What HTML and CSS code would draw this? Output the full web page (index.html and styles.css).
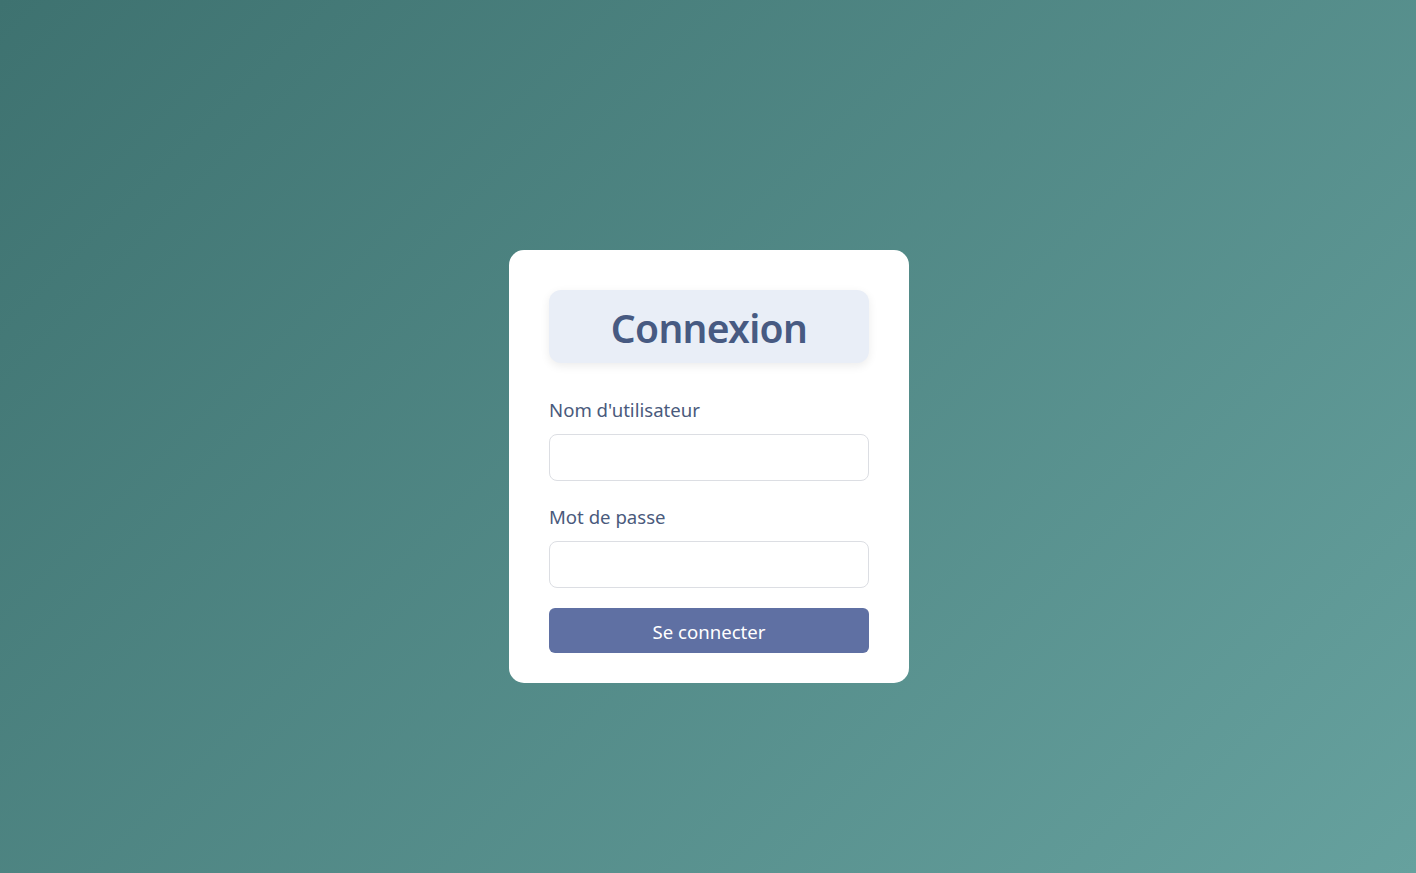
FILE: index.html
```html
<!DOCTYPE html>
<html lang="fr">
<head>
<meta charset="utf-8">
<title>Connexion</title>
<link rel="stylesheet" href="styles.css">
</head>
<body>
<main class="page">
  <form class="card">
    <h1 class="title">Connexion</h1>
    <div class="field">
      <label class="label" for="user">Nom d'utilisateur</label>
      <input class="input" id="user" type="text">
    </div>
    <div class="field">
      <label class="label" for="pass">Mot de passe</label>
      <input class="input" id="pass" type="password">
    </div>
    <button class="btn" type="button">Se connecter</button>
  </form>
</main>
</body>
</html>
```
FILE: styles.css
```css
* { box-sizing: border-box; }
html, body { margin: 0; height: 100%; }
body {
  font-family: "Noto Sans", "Open Sans", sans-serif;
  background: linear-gradient(135deg, #3e7270 0%, #66a19e 100%);
}
.page {
  min-height: 100vh;
  padding: 60px 0 0 2px;
  display: flex;
  align-items: center;
  justify-content: center;
}
.card {
  width: 400px;
  background: #fff;
  border-radius: 15px;
  padding: 40px 40px 30px;
  display: flex;
  flex-direction: column;
}
.title {
  margin: 0 0 35px;
  height: 73px;
  display: flex;
  align-items: center;
  justify-content: center;
  background: #e9eef7;
  border-radius: 12px;
  box-shadow: 0 3px 10px rgba(0,0,0,0.08);
  color: #475a82;
  font-size: 39px;
  font-weight: 600;
  letter-spacing: -0.7px;
  padding-top: 1px;
}
.field {
  display: flex;
  flex-direction: column;
  margin-bottom: 24px;
}
.field + .field { margin-bottom: 20px; }
.label {
  color: #4a5a7c;
  font-size: 18.6px;
  line-height: 24px;
  margin-bottom: 12px;
}
.input {
  height: 47px;
  border: 1px solid #dcdee3;
  border-radius: 8px;
  padding: 0 12px;
  font: inherit;
}
.btn {
  height: 45px;
  border: 0;
  border-radius: 6px;
  background: #5f70a3;
  color: #fff;
  font: inherit;
  font-size: 18.6px;
  padding-top: 2px;
}
```
